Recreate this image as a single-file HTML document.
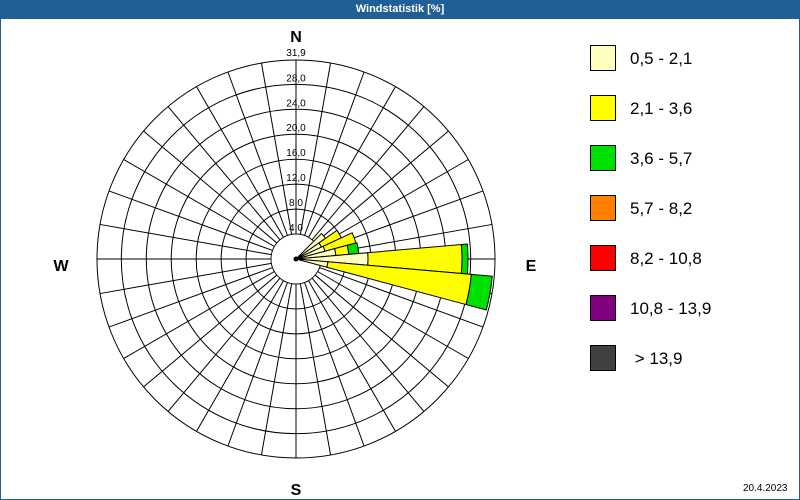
<!DOCTYPE html>
<html><head><meta charset="utf-8"><style>
html,body{margin:0;padding:0;width:800px;height:500px;overflow:hidden;background:#fff;font-family:"Liberation Sans",sans-serif}
#f{position:absolute;left:0;top:0;width:798px;height:498px;border:1px solid #1f5f96}
#t{position:absolute;left:0;top:0;width:800px;height:19px;background:#1f5f96;color:#fff;font-size:11px;font-weight:bold;text-align:center;line-height:18px}
.lb{position:absolute;left:590px;width:24px;height:24px;border:1px solid #000}
.lt{position:absolute;left:630px;font-size:17px;color:#000;line-height:20px}
</style></head><body>
<div id="f"></div>
<div id="t">Windstatistik [%]</div>
<svg id="s" width="800" height="500" style="position:absolute;left:0;top:0"></svg>
<div class="lb" style="top:45px;background:#ffffc0"></div><div class="lt" style="top:49px">0,5 - 2,1</div>
<div class="lb" style="top:95px;background:#ffff00"></div><div class="lt" style="top:99px">2,1 - 3,6</div>
<div class="lb" style="top:145px;background:#00e000"></div><div class="lt" style="top:149px">3,6 - 5,7</div>
<div class="lb" style="top:195px;background:#ff8000"></div><div class="lt" style="top:199px">5,7 - 8,2</div>
<div class="lb" style="top:245px;background:#ff0000"></div><div class="lt" style="top:249px">8,2 - 10,8</div>
<div class="lb" style="top:295px;background:#800080"></div><div class="lt" style="top:299px">10,8 - 13,9</div>
<div class="lb" style="top:345px;background:#404040"></div><div class="lt" style="top:349px">&nbsp;&gt; 13,9</div>
<div style="position:absolute;left:743px;top:483px;font-size:10px">20.4.2023</div>
<script>
var cx=296,cy=259,k=199/31.9,s='';
function P(a,r){var t=(a-90)*Math.PI/180;return [(cx+r*Math.cos(t)).toFixed(2),(cy+r*Math.sin(t)).toFixed(2)];}
for(var a=0;a<360;a+=10){var p=P(a,25),q=P(a,199);s+='<line x1="'+p[0]+'" y1="'+p[1]+'" x2="'+q[0]+'" y2="'+q[1]+'" stroke="#000" stroke-width="1"/>';}
[4,8,12,16,20,24,28].forEach(function(v){s+='<circle cx="'+cx+'" cy="'+cy+'" r="'+(v*k).toFixed(2)+'" fill="none" stroke="#000"/>';});
s+='<circle cx="'+cx+'" cy="'+cy+'" r="199" fill="none" stroke="#000"/>';
s+='<circle cx="'+cx+'" cy="'+cy+'" r="24.5" fill="#fff"/>';
function sec(a,r0,r1,c){var a0=a-5,a1=a+5,p1=P(a0,r0),p2=P(a0,r1),p3=P(a1,r1),p4=P(a1,r0);
s+='<path d="M'+p1+' L'+p2+' A'+r1+' '+r1+' 0 0 1 '+p3+' L'+p4+' A'+r0+' '+r0+' 0 0 0 '+p1+'Z" fill="'+c+'" stroke="#000" stroke-width="1"/>';}
var bars=[[50,[36]],[60,[28,50]],[70,[30,62]],[80,[40,53,63]],[90,[72,166,172]],[100,[32,176,197]]];
var cols=['#ffffc0','#ffff00','#00e000'];
bars.forEach(function(b){var r0=0;b[1].forEach(function(r,i){sec(b[0],r0,r,cols[i]);r0=r;});});
s+='<circle cx="'+cx+'" cy="'+cy+'" r="2.5" fill="#000"/>';
var labs=[[4,'4,0'],[8,'8,0'],[12,'12,0'],[16,'16,0'],[20,'20,0'],[24,'24,0'],[28,'28,0']];
labs.forEach(function(l){s+='<text x="'+cx+'" y="'+(cy-l[0]*k-3)+'" font-size="10" text-anchor="middle" fill="#000" font-family="Liberation Sans">'+l[1]+'</text>';});
s+='<text x="'+cx+'" y="56" font-size="10" text-anchor="middle" font-family="Liberation Sans">31,9</text>';
[['N',296,42],['W',61,271],['E',531,271],['S',296,495]].forEach(function(l){s+='<text x="'+l[1]+'" y="'+l[2]+'" font-size="16" font-weight="bold" text-anchor="middle" font-family="Liberation Sans">'+l[0]+'</text>';});
document.getElementById('s').innerHTML=s;
</script>
</body></html>
